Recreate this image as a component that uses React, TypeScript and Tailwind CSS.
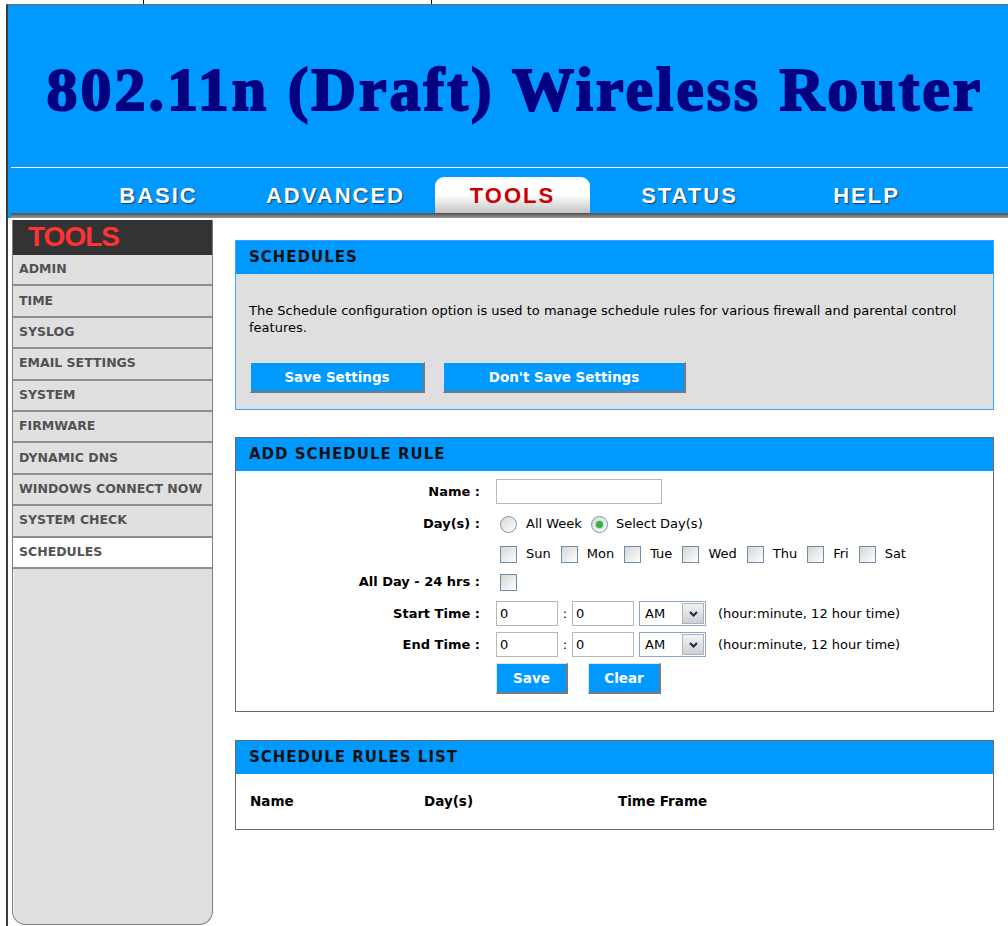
import React from "react";

const NAV = ["BASIC", "ADVANCED", "TOOLS", "STATUS", "HELP"];
const MENU = [
  "ADMIN",
  "TIME",
  "SYSLOG",
  "EMAIL SETTINGS",
  "SYSTEM",
  "FIRMWARE",
  "DYNAMIC DNS",
  "WINDOWS CONNECT NOW",
  "SYSTEM CHECK",
  "SCHEDULES",
];
const DAYS = ["Sun", "Mon", "Tue", "Wed", "Thu", "Fri", "Sat"];

function Radio({ checked }: { checked?: boolean }) {
  return (
    <span className="w-[17px] h-[17px] rounded-full border border-[#7c91a8] bg-linear-to-br from-[#d9d9d4] to-white flex items-center justify-center shrink-0">
      {checked && (
        <span className="w-[7px] h-[7px] rounded-full bg-[#34b144] shadow-[0_0_0_1px_#b5e3b5]" />
      )}
    </span>
  );
}

function Check() {
  return (
    <span className="w-[17px] h-[17px] border border-[#6f8dab] bg-linear-to-br from-[#d6d6d2] to-white shrink-0" />
  );
}

function TextBox({ value, width }: { value?: string; width: string }) {
  return (
    <div
      className={`${width} h-[25px] border border-[#b4b8bc] bg-white flex items-center pl-[3px] text-[13px] text-black`}
    >
      {value}
    </div>
  );
}

function AmSelect() {
  return (
    <div className="w-[67px] h-[25px] border border-[#8ea6c8] bg-white flex items-center justify-between pl-[5px] pr-[1px] text-[13px] text-black">
      <span>AM</span>
      <span className="w-[22px] h-[21px] border border-[#a9b4c2] bg-linear-to-b from-[#f4f4f4] to-[#cfcfcf] flex items-center justify-center">
        <svg width="11" height="8" viewBox="0 0 11 8">
          <path d="M2 2 L5.5 5.5 L9 2" fill="none" stroke="#1d2b5c" strokeWidth="2.2" />
        </svg>
      </span>
    </div>
  );
}

function BlueButton({ label, cls }: { label: string; cls: string }) {
  return (
    <button
      className={`${cls} h-[31px] bg-[#0099ff] text-white font-bold text-[13.5px] border-t border-l border-t-[#e4e4e4] border-l-[#e4e4e4] border-r-2 border-b-2 border-r-[#7a7a7a] border-b-[#7a7a7a] flex items-center justify-center`}
    >
      {label}
    </button>
  );
}

function BoxHeader({ title }: { title: string }) {
  return (
    <div className="h-[33px] bg-[#0099ff] flex items-center pl-[13px] text-[15px] font-bold tracking-[1px] text-[#111]">
      {title}
    </div>
  );
}

function FormRow({
  label,
  h,
  mt,
  children,
}: {
  label?: string;
  h: string;
  mt: string;
  children: React.ReactNode;
}) {
  return (
    <div className={`${h} ${mt} flex items-center`}>
      <div className="w-[244px] shrink-0 text-right text-[13px] font-bold text-black">{label}</div>
      <div className="ml-[16px] flex items-center h-full">{children}</div>
    </div>
  );
}

export default function App() {
  return (
    <div className="w-[1008px] h-[926px] bg-white overflow-hidden flex flex-col font-['DejaVu_Sans',sans-serif]">
      {/* table rules above the banner */}
      <div className="h-[4px] flex shrink-0">
        <div className="w-[143px]" />
        <div className="w-[288px] border-l border-black" />
        <div className="border-l border-black" />
      </div>

      <div className="flex-1 min-h-0 ml-[6px] flex flex-col border-l-2 border-l-[#3a3a3a] border-t border-t-[#6e6e6e]">
        {/* banner */}
        <div className="h-[162px] shrink-0 bg-[#0099ff] pt-[53px] pl-[14px] text-center">
          <h1 className="whitespace-nowrap text-[62px] leading-[62px] font-bold tracking-[3px] text-[#000080] [-webkit-text-stroke:2px_#000080] font-['Liberation_Serif',serif]">
            802.11n (Draft) Wireless Router
          </h1>
        </div>

        {/* top navigation */}
        <div className="shrink-0 bg-[#0099ff]">
          <div className="h-px ml-[3px] bg-white" />
          <div className="h-[45px] flex items-end pl-[62px]">
            {NAV.map((n) => (
              <div key={n} className="w-[177px] h-full flex items-end justify-center">
                {n === "TOOLS" ? (
                  <div className="w-[155px] h-[36px] rounded-t-[9px] bg-linear-to-b from-white via-white to-[#c4c4c4] flex items-center justify-center text-[22px] font-bold tracking-[2px] text-[#cc0000] font-['Liberation_Sans',sans-serif]">
                    {n}
                  </div>
                ) : (
                  <div className="h-[36px] flex items-center justify-center text-[22px] font-bold tracking-[2px] text-white [text-shadow:1px_1px_1px_#1a3a66] font-['Liberation_Sans',sans-serif]">
                    {n}
                  </div>
                )}
              </div>
            ))}
          </div>
          <div className="h-[5px] ml-[3px] bg-linear-to-b from-[#4e4e4e] to-[#9c9c9c]" />
        </div>

        <div className="flex-1 min-h-0 flex">
          {/* side menu */}
          <div className="w-[205px] shrink-0 pl-[4px] pt-[2px] pb-px flex flex-col">
            <div className="flex-1 flex flex-col bg-[#dfdfdf] border-l border-r border-b border-[#7d7d7d] shadow-[inset_1px_0_0_#f4f4f4] rounded-b-[14px] overflow-hidden">
              <div className="h-[35px] shrink-0 bg-[#333333] flex items-center pl-[15px] pb-[2px] text-[28px] font-bold tracking-[-1px] text-[#ff3333] font-['Liberation_Sans',sans-serif]">
                TOOLS
              </div>
              {MENU.map((m) => (
                <div
                  key={m}
                  className={`h-[31.4px] shrink-0 border-b-2 border-[#8e8e8e] flex items-center pl-[6px] text-[12.5px] font-bold text-[#525252] ${
                    m === "SCHEDULES" ? "bg-white" : "bg-[#e0e0e0]"
                  }`}
                >
                  {m}
                </div>
              ))}
            </div>
          </div>

          {/* main panels */}
          <div className="flex-1 min-w-0 pl-[22px] pr-[14px] pt-[22px] flex flex-col">
            <section className="border border-[#39a3ff] bg-[#dfdfdf]">
              <BoxHeader title="SCHEDULES" />
              <div className="pl-[13px] pt-[28px] pb-[16px]">
                <p className="text-[13px] leading-[17px] text-black">
                  The Schedule configuration option is used to manage schedule rules for various firewall and parental control
                  <br />
                  features.
                </p>
                <div className="mt-[26px] ml-px flex gap-[18px]">
                  <BlueButton label="Save Settings" cls="w-[175px]" />
                  <BlueButton label="Don't Save Settings" cls="w-[243px]" />
                </div>
              </div>
            </section>

            <section className="mt-[27px] border border-[#6a6a6a] bg-white">
              <BoxHeader title="ADD SCHEDULE RULE" />
              <div className="pt-[8px] pb-[17px]">
                <FormRow label="Name :" h="h-[25px]" mt="mt-0">
                  <TextBox width="w-[166px]" />
                </FormRow>
                <FormRow label="Day(s) :" h="h-[24px]" mt="mt-[8px]">
                  <div className="flex items-center pl-[4px] text-[13px] text-black">
                    <Radio />
                    <span className="ml-[9px]">All Week</span>
                    <span className="ml-[9px]">
                      <Radio checked />
                    </span>
                    <span className="ml-[8px]">Select Day(s)</span>
                  </div>
                </FormRow>
                <FormRow h="h-[24px]" mt="mt-[6px]">
                  <div className="flex items-center gap-[10px] pl-[4px] text-[13px] text-black">
                    {DAYS.map((d) => (
                      <span key={d} className="flex items-center gap-[9px]">
                        <Check />
                        {d}
                      </span>
                    ))}
                  </div>
                </FormRow>
                <FormRow label="All Day - 24 hrs :" h="h-[24px]" mt="mt-[4px]">
                  <div className="pl-[4px] flex">
                    <Check />
                  </div>
                </FormRow>
                <FormRow label="Start Time :" h="h-[25px]" mt="mt-[7px]">
                  <TextBox value="0" width="w-[62px]" />
                  <span className="w-[14px] text-center text-[13px] text-black">:</span>
                  <TextBox value="0" width="w-[62px]" />
                  <span className="ml-[5px]">
                    <AmSelect />
                  </span>
                  <span className="ml-[12px] text-[13px] text-black">(hour:minute, 12 hour time)</span>
                </FormRow>
                <FormRow label="End Time :" h="h-[25px]" mt="mt-[6px]">
                  <TextBox value="0" width="w-[62px]" />
                  <span className="w-[14px] text-center text-[13px] text-black">:</span>
                  <TextBox value="0" width="w-[62px]" />
                  <span className="ml-[5px]">
                    <AmSelect />
                  </span>
                  <span className="ml-[12px] text-[13px] text-black">(hour:minute, 12 hour time)</span>
                </FormRow>
                <FormRow h="h-[31px]" mt="mt-[6px]">
                  <div className="flex gap-[20px]">
                    <BlueButton label="Save" cls="w-[72px]" />
                    <BlueButton label="Clear" cls="w-[73px]" />
                  </div>
                </FormRow>
              </div>
            </section>

            <section className="mt-[28px] border border-[#6a6a6a] bg-white">
              <BoxHeader title="SCHEDULE RULES LIST" />
              <div className="h-[55px] flex items-center pl-[14px] text-[13.5px] font-bold text-black">
                <span className="w-[174px]">Name</span>
                <span className="w-[194px]">Day(s)</span>
                <span>Time Frame</span>
              </div>
            </section>
          </div>
        </div>
      </div>
    </div>
  );
}
